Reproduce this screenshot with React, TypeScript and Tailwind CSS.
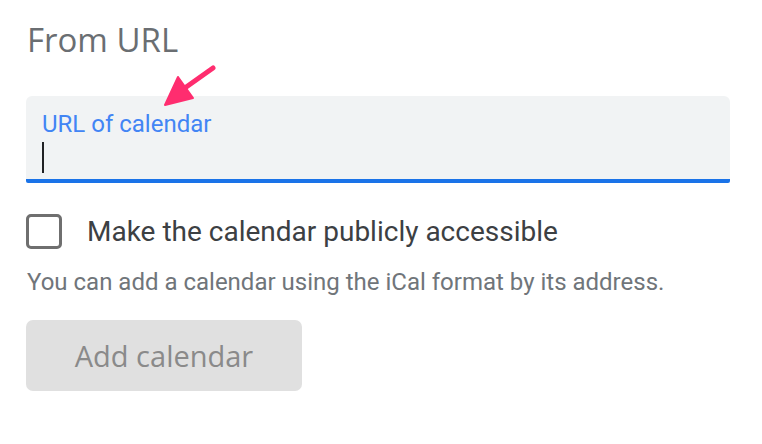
import React from "react";

export default function App() {
  return (
    <div className="relative w-[762px] h-[444px] bg-white overflow-hidden" style={{ fontFamily: "Roboto, 'Liberation Sans', sans-serif" }}>
      <div className="flex flex-col pl-[26px] pt-[20px] w-[730px]">
        <h1 className="text-[33px] leading-[40px] text-[#6a6e72] font-normal ml-[1px]" style={{ fontFamily: "'Open Sans', Roboto, sans-serif" }}>
          From URL
        </h1>
        <div className="mt-[36px] h-[87px] bg-[#f1f3f4] rounded-t-[6px] rounded-b-[2px] border-b-[4px] border-[#1a73e8] pl-[16px] pt-[14px] flex flex-col">
          <span className="text-[24px] leading-[28px] text-[#4285f4]">URL of calendar</span>
          <span className="mt-[4px] w-[2px] h-[31px] bg-[#202124]" />
        </div>
        <div className="mt-[31px] flex items-center gap-[25px]">
          <div className="w-[36px] h-[35px] rounded-[5px] border-[3px] border-[#6f6f6f]" />
          <span className="text-[28px] leading-[34px] text-[#3c4043]">Make the calendar publicly accessible</span>
        </div>
        <p className="mt-[19px] ml-[1px] text-[24px] leading-[28px] text-[#70757a]">
          You can add a calendar using the iCal format by its address.
        </p>
        <button className="mt-[24px] w-[276px] h-[71px] rounded-[7px] bg-[#e0e0e0] text-[#8a8a8a] text-[29px] flex items-center justify-center" style={{ fontFamily: "'Open Sans', Roboto, sans-serif" }}>
          Add calendar
        </button>
      </div>
      <svg className="absolute left-0 top-0" width="762" height="444" viewBox="0 0 762 444">
        <line x1="213" y1="68" x2="182" y2="90" stroke="#ff2d6f" strokeWidth="5" strokeLinecap="round" />
        <polygon points="165,105 178,77 193,98" fill="#ff2d6f" stroke="#ff2d6f" strokeWidth="2" strokeLinejoin="round" />
      </svg>
    </div>
  );
}
